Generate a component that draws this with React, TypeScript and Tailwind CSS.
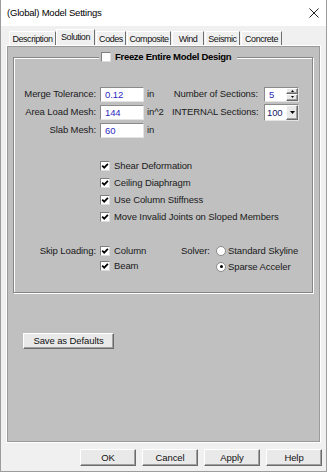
import type { ReactNode } from 'react'

const tabs = [
  { label: 'Description', cls: 'ml-[8px] w-[47px] h-[15px]' },
  { label: 'Solution', cls: 'w-[39px] h-[17px]', active: true },
  { label: 'Codes', cls: 'ml-[1px] w-[30px] h-[15px]' },
  { label: 'Composite', cls: 'ml-[1px] w-[44px] h-[15px]' },
  { label: 'Wind', cls: 'ml-[1px] w-[32px] h-[15px]' },
  { label: 'Seismic', cls: 'ml-[1px] w-[35px] h-[15px]' },
  { label: 'Concrete', cls: 'ml-[1px] w-[41px] h-[15px]' },
]

const raised =
  'bg-[#e9e9e9] border border-t-white border-l-white border-r-[#6b6b6b] border-b-[#6b6b6b] shadow-[inset_-1px_-1px_0_#a0a0a0] flex items-center justify-center'

function Checkbox({ checked = true }: { checked?: boolean }) {
  return (
    <span className="flex items-center justify-center w-[10px] h-[10px] shrink-0 bg-white border border-t-[#7f7f7f] border-l-[#7f7f7f] border-r-[#dcdcdc] border-b-[#dcdcdc]">
      {checked && (
        <svg width="8" height="8" viewBox="0 0 8 8">
          <path d="M1.2 3.7 L3.2 5.7 L6.9 1.9" fill="none" stroke="#000" strokeWidth="1.7" />
        </svg>
      )}
    </span>
  )
}

function Radio({ checked = false }: { checked?: boolean }) {
  return (
    <span className="flex items-center justify-center w-[10px] h-[10px] shrink-0 rounded-full bg-white border border-[#8a8a8a]">
      {checked && <span className="w-[3px] h-[3px] rounded-full bg-black" />}
    </span>
  )
}

function Field({ value }: { value: string }) {
  return (
    <span className="ml-[4px] w-[44px] h-[15px] shrink-0 bg-white border border-t-[#8a8a8a] border-l-[#8a8a8a] border-r-[#e4e4e4] border-b-[#e4e4e4] pl-[4px] leading-[13px] text-[#2b2bc0]">
      {value}
    </span>
  )
}

function Spin() {
  return (
    <div className="ml-[6px] flex w-[35px] h-[15px] bg-white border border-t-[#8a8a8a] border-l-[#8a8a8a] border-r-[#e4e4e4] border-b-[#e4e4e4]">
      <span className="flex-1 pl-[4px] leading-[13px] text-[#2b2bc0]">5</span>
      <div className="w-[12px] flex flex-col">
        <span className={`${raised} flex-1`}>
          <svg width="3" height="2" viewBox="0 0 3 2">
            <path d="M0 2 L1.5 0 L3 2 Z" fill="#000" />
          </svg>
        </span>
        <span className={`${raised} flex-1`}>
          <svg width="3" height="2" viewBox="0 0 3 2">
            <path d="M0 0 L1.5 2 L3 0 Z" fill="#000" />
          </svg>
        </span>
      </div>
    </div>
  )
}

function Combo() {
  return (
    <div className="ml-[6px] flex w-[35px] h-[17px] bg-white border border-t-[#8a8a8a] border-l-[#8a8a8a] border-r-[#e4e4e4] border-b-[#e4e4e4]">
      <span className="flex-1 pl-[2px] leading-[15px] text-[#1a1a6a]">100</span>
      <span className={`${raised} w-[12px]`}>
        <svg width="5" height="3" viewBox="0 0 5 3">
          <path d="M0 0 L5 0 L2.5 3 Z" fill="#000" />
        </svg>
      </span>
    </div>
  )
}

function Row({ children }: { children: ReactNode }) {
  return <div className="flex items-center h-[18px] whitespace-nowrap">{children}</div>
}

export default function App() {
  return (
    <div className="w-[327px] h-[472px] overflow-hidden bg-[#f0f0f0] border-x border-b border-[#9c9c9c] flex flex-col font-['Liberation_Sans',Arial,sans-serif] text-[9.5px] tracking-[-0.1px] leading-[12px] text-[#1a1a1a]">
      <div className="h-[26px] shrink-0 bg-white flex items-center justify-between pl-[6px] pr-[7px]">
        <span className="text-[9.5px] tracking-[-0.2px] text-black">(Global) Model Settings</span>
        <svg width="10" height="10" viewBox="0 0 10 10">
          <path d="M0.5 0.5 L9.5 9.5 M9.5 0.5 L0.5 9.5" stroke="#222" strokeWidth="1" />
        </svg>
      </div>

      <div className="h-[20px] shrink-0 flex items-end">
        {tabs.map((t) => (
          <div
            key={t.label}
            className={`${t.cls} bg-[#f0f0f0] border-t border-l border-r border-t-white border-l-white border-r-[#6e6e6e] flex justify-center pt-[1px] text-[9px] tracking-[-0.45px] text-[#111]`}
          >
            {t.label}
          </div>
        ))}
      </div>

      <div className="ml-[6px] w-[313px] h-[396px] shrink-0 bg-[#c0c0c0] border border-[#9a9a9a] shadow-[0_0_0_1px_#fff] pt-[3px] pl-[5px]">
        <fieldset className="w-[300px] border border-[#858585] shadow-[inset_1px_1px_0_#fff,1px_1px_0_#fff]">
          <legend className="ml-[85px] h-[14px] pl-[2px] pr-[6px] bg-[#c0c0c0] flex items-center gap-[4px]">
            <Checkbox checked={false} />
            <span className="font-bold tracking-[-0.3px] text-black">Freeze Entire Model Design</span>
          </legend>

          <div className="pt-[21px] pb-[18px]">
            <Row>
              <span className="w-[82px] text-right">Merge Tolerance:</span>
              <Field value="0.12" />
              <span className="ml-[3px] w-[25px]">in</span>
              <span className="w-[86px] text-right">Number of Sections:</span>
              <Spin />
            </Row>
            <Row>
              <span className="w-[82px] text-right">Area Load Mesh:</span>
              <Field value="144" />
              <span className="ml-[3px] w-[25px]">in^2</span>
              <span className="w-[86px] text-right">INTERNAL Sections:</span>
              <Combo />
            </Row>
            <Row>
              <span className="w-[82px] text-right">Slab Mesh:</span>
              <Field value="60" />
              <span className="ml-[3px] w-[25px]">in</span>
            </Row>

            <div className="mt-[18px] ml-[86px] flex flex-col">
              {['Shear Deformation', 'Ceiling Diaphragm', 'Use Column Stiffness', 'Move Invalid Joints on Sloped Members'].map((l) => (
                <div key={l} className="h-[17px] flex items-center gap-[4px]">
                  <Checkbox />
                  <span>{l}</span>
                </div>
              ))}
            </div>

            <div className="mt-[18px] flex">
              <span className="w-[82px] h-[15px] leading-[15px] text-right">Skip Loading:</span>
              <div className="ml-[4px] w-[81px] flex flex-col">
                <div className="h-[15px] flex items-center gap-[4px]">
                  <Checkbox />
                  <span>Column</span>
                </div>
                <div className="h-[15px] flex items-center gap-[4px]">
                  <Checkbox />
                  <span>Beam</span>
                </div>
              </div>
              <span className="w-[27px] h-[15px] leading-[15px]">Solver:</span>
              <div className="ml-[8px] flex flex-col">
                <div className="h-[15px] flex items-center gap-[2px]">
                  <Radio />
                  <span>Standard Skyline</span>
                </div>
                <div className="mt-[1px] h-[15px] flex items-center gap-[2px]">
                  <Radio checked />
                  <span>Sparse Acceler</span>
                </div>
              </div>
            </div>
          </div>
        </fieldset>

        <button className={`${raised} mt-[40px] ml-[10px] w-[91px] h-[16px] text-[#111]`}>Save as Defaults</button>
      </div>

      <div className="mt-[7px] pl-[79px] flex gap-[6px]">
        {['OK', 'Cancel', 'Apply', 'Help'].map((b) => (
          <button key={b} className={`${raised} w-[56px] h-[17px] text-[#111]`}>
            {b}
          </button>
        ))}
      </div>
    </div>
  )
}
